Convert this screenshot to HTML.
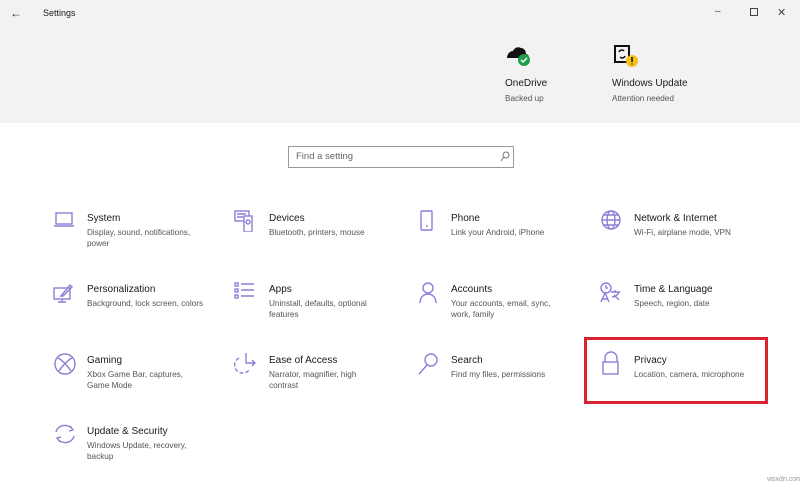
<!DOCTYPE html>
<html><head><meta charset="utf-8"><style>
*{margin:0;padding:0;box-sizing:border-box}
body{width:800px;height:488px;background:#fff;font-family:"Liberation Sans",sans-serif;position:relative;overflow:hidden}
.hdr{position:absolute;left:0;top:0;width:800px;height:123px;background:#f2f2f2}
.t{position:absolute;font-size:10px;color:#1a1a1a;white-space:nowrap}
.s{position:absolute;font-size:8.2px;color:#555;line-height:11px}
svg.i{position:absolute;fill:none;stroke:#8a7fd8;stroke-width:1.4}
.it .t{top:0}
</style></head><body>
<div class="hdr"></div>
<div class="t" style="left:10px;top:6px;font-size:12px;color:#333">&#8592;</div>
<div class="t" style="left:43px;top:8px;font-size:9px">Settings</div>
<div class="t" style="left:715px;top:6px;font-size:10px;color:#444">&#8211;</div>
<div style="position:absolute;left:750px;top:8px;width:8px;height:8px;border:1px solid #444"></div>
<div class="t" style="left:777px;top:6px;font-size:11px;color:#444">&#10005;</div>

<svg style="position:absolute;left:505px;top:44px" width="28" height="24"><path d="M2 14c0-4 3-7 6-7 1-3 5-5 8-3 3 0 5 3 5 6 2 0 3 2 3 4H2z" fill="#111"/><circle cx="19" cy="16" r="6" fill="#1e9e4a"/><path d="M16 16l2 2 4-4" stroke="#fff" stroke-width="1.5" fill="none"/></svg>
<div class="t" style="left:505px;top:78px;font-size:10px">OneDrive</div>
<div class="s" style="left:505px;top:93px">Backed up</div>
<svg style="position:absolute;left:612px;top:42px" width="28" height="28"><path d="M3 4h14v16H3z" stroke="#111" stroke-width="2" fill="none"/><path d="M7 10a3 3 0 015-1M13 14a3 3 0 01-5 1" stroke="#111" stroke-width="1.5" fill="none"/><circle cx="20" cy="19" r="6" fill="#f2c017"/><path d="M20 15v5M20 21.5v1" stroke="#111" stroke-width="1.5"/></svg>
<div class="t" style="left:612px;top:78px;font-size:10px">Windows Update</div>
<div class="s" style="left:612px;top:93px">Attention needed</div>

<div style="position:absolute;left:288px;top:146px;width:226px;height:22px;border:1px solid #999;background:#fff"></div>
<div class="t" style="left:296px;top:151px;font-size:9.5px;color:#666">Find a setting</div>
<svg style="position:absolute;left:500px;top:150px" width="10" height="12"><circle cx="6" cy="5" r="3" stroke="#777" fill="none"/><path d="M4 7l-3 4" stroke="#777"/></svg>

<!-- row1 -->
<svg class="i" style="left:53px;top:211px" width="22" height="18"><rect x="3" y="2" width="16" height="11"/><path d="M1 15h20"/></svg>
<div class="t" style="left:87px;top:213px">System</div><div class="s" style="left:87px;top:227px;width:120px">Display, sound, notifications, power</div>
<svg class="i" style="left:234px;top:210px" width="22" height="22"><rect x="1" y="1" width="14" height="10"/><rect x="10" y="6" width="8" height="16" fill="#fff"/><circle cx="14" cy="12" r="2"/><path d="M3 4h9M3 7h6"/></svg>
<div class="t" style="left:269px;top:213px">Devices</div><div class="s" style="left:269px;top:227px">Bluetooth, printers, mouse</div>
<svg class="i" style="left:418px;top:209px" width="18" height="24"><rect x="3" y="2" width="11" height="19" rx="1"/><path d="M8 17h2"/></svg>
<div class="t" style="left:451px;top:213px">Phone</div><div class="s" style="left:451px;top:227px">Link your Android, iPhone</div>
<svg class="i" style="left:600px;top:209px" width="24" height="24"><circle cx="11" cy="11" r="9"/><ellipse cx="11" cy="11" rx="4" ry="9"/><path d="M2 11h18M4 6h14M4 16h14"/></svg>
<div class="t" style="left:634px;top:213px">Network &amp; Internet</div><div class="s" style="left:634px;top:227px">Wi-Fi, airplane mode, VPN</div>
<!-- row2 -->
<svg class="i" style="left:53px;top:283px" width="22" height="20"><rect x="1" y="5" width="16" height="11"/><path d="M5 19h8M9 16v3M8 13l9-11 2 2-9 9z"/></svg>
<div class="t" style="left:87px;top:284px">Personalization</div><div class="s" style="left:87px;top:298px">Background, lock screen, colors</div>
<svg class="i" style="left:234px;top:282px" width="22" height="20"><rect x="1" y="1" width="3" height="3"/><rect x="1" y="7" width="3" height="3"/><rect x="1" y="13" width="3" height="3"/><path d="M7 2h13M7 8h13M7 14h13"/></svg>
<div class="t" style="left:269px;top:284px">Apps</div><div class="s" style="left:269px;top:298px;width:110px">Uninstall, defaults, optional features</div>
<svg class="i" style="left:418px;top:281px" width="22" height="24"><circle cx="10" cy="7" r="5"/><path d="M2 22c0-6 4-9 8-9s8 3 8 9"/></svg>
<div class="t" style="left:451px;top:284px">Accounts</div><div class="s" style="left:451px;top:298px;width:110px">Your accounts, email, sync, work, family</div>
<svg class="i" style="left:599px;top:281px" width="24" height="24"><circle cx="7" cy="7" r="5"/><path d="M7 4v3h2M2 21l4-9 4 9M3.5 18h5M12 11h9M16 9v2M13 16c3 0 6-2 7-5M15 14l5 5"/></svg>
<div class="t" style="left:634px;top:284px">Time &amp; Language</div><div class="s" style="left:634px;top:298px">Speech, region, date</div>
<!-- row3 -->
<svg class="i" style="left:53px;top:352px" width="24" height="24"><circle cx="12" cy="12" r="10"/><path d="M5 6c4 2 10 8 13 13M19 6c-4 2-10 8-13 13"/></svg>
<div class="t" style="left:87px;top:355px">Gaming</div><div class="s" style="left:87px;top:369px;width:120px">Xbox Game Bar, captures, Game Mode</div>
<svg class="i" style="left:234px;top:352px" width="24" height="22"><path d="M5 6a8 8 0 1010 12" stroke-dasharray="4 2"/><path d="M12 1v10h9M18 8l3 3-3 3"/></svg>
<div class="t" style="left:269px;top:355px">Ease of Access</div><div class="s" style="left:269px;top:369px;width:110px">Narrator, magnifier, high contrast</div>
<svg class="i" style="left:417px;top:352px" width="24" height="24"><circle cx="14" cy="8" r="6"/><path d="M10 13l-8 9"/></svg>
<div class="t" style="left:451px;top:355px">Search</div><div class="s" style="left:451px;top:369px">Find my files, permissions</div>
<svg class="i" style="left:601px;top:351px" width="20" height="26"><path d="M4 11V7a6 6 0 0112 0v4"/><rect x="2" y="11" width="15" height="12"/></svg>
<div class="t" style="left:634px;top:355px">Privacy</div><div class="s" style="left:634px;top:369px">Location, camera, microphone</div>
<div style="position:absolute;left:584px;top:337px;width:184px;height:67px;border:3px solid #d9232f"></div>
<!-- row4 -->
<svg class="i" style="left:53px;top:423px" width="24" height="22"><path d="M3 9a9 8 0 0117-2M21 13a9 8 0 01-17 2M17 3l3 4-4 1M7 19l-3-4 4-1"/></svg>
<div class="t" style="left:87px;top:426px">Update &amp; Security</div><div class="s" style="left:87px;top:440px;width:110px">Windows Update, recovery, backup</div>
<div class="t" style="left:767px;top:476px;font-size:7px;color:#999">wsxdn.com</div>
</body></html>
